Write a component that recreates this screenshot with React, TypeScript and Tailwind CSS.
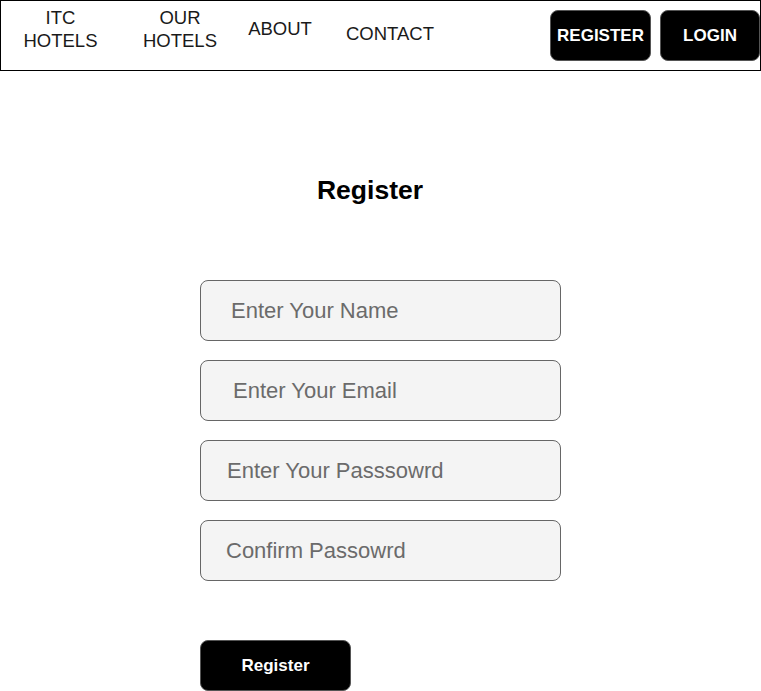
export default function App() {
  const fields = [
    { placeholder: "Enter Your Name", pad: "pl-[30px]" },
    { placeholder: "Enter Your Email", pad: "pl-[32px]" },
    { placeholder: "Enter Your Passsowrd", pad: "pl-[26px]" },
    { placeholder: "Confirm Passowrd", pad: "pl-[25px]" },
  ];

  return (
    <div className="min-h-screen bg-white font-['Liberation_Sans',Arial,sans-serif] text-black">
      <nav className="flex h-[71px] w-[761px] border border-black">
        <a className="w-[119px] pt-[5px] text-center text-[18.5px] leading-[23px] text-[#1a1a1a]">
          ITC
          <br />
          HOTELS
        </a>
        <a className="w-[120px] pt-[5px] text-center text-[18.5px] leading-[23px] text-[#1a1a1a]">
          OUR
          <br />
          HOTELS
        </a>
        <a className="w-[80px] pt-[16px] text-center text-[18.5px] leading-[23px] text-[#1a1a1a]">
          ABOUT
        </a>
        <a className="w-[140px] pt-[21px] text-center text-[18.5px] leading-[23px] text-[#1a1a1a]">
          CONTACT
        </a>
        <div className="ml-auto flex gap-[9px] pt-[9px]">
          <button className="h-[51px] w-[101px] rounded-[8px] border border-[#555] bg-black text-[17px] font-bold text-white">
            REGISTER
          </button>
          <button className="h-[51px] w-[100px] rounded-[8px] border border-[#555] bg-black text-[17px] font-bold text-white">
            LOGIN
          </button>
        </div>
      </nav>

      <main className="flex flex-col">
        <h1 className="mt-[102px] w-[740px] text-center text-[26.5px] font-bold leading-[34px]">
          Register
        </h1>
        <form className="ml-[200px] mt-[73px] flex flex-col">
          <div className="flex flex-col gap-[19px]">
            {fields.map((f) => (
              <input
                key={f.placeholder}
                placeholder={f.placeholder}
                className={`h-[61px] w-[361px] rounded-[8px] border border-[#666] bg-[#f4f4f4] ${f.pad} text-[22px] text-[#333] outline-none placeholder:text-[#6b6b6b]`}
              />
            ))}
          </div>
          <button
            type="button"
            className="mt-[59px] h-[51px] w-[151px] rounded-[8px] border border-[#555] bg-black text-[17px] font-bold text-white"
          >
            Register
          </button>
        </form>
      </main>
    </div>
  );
}
